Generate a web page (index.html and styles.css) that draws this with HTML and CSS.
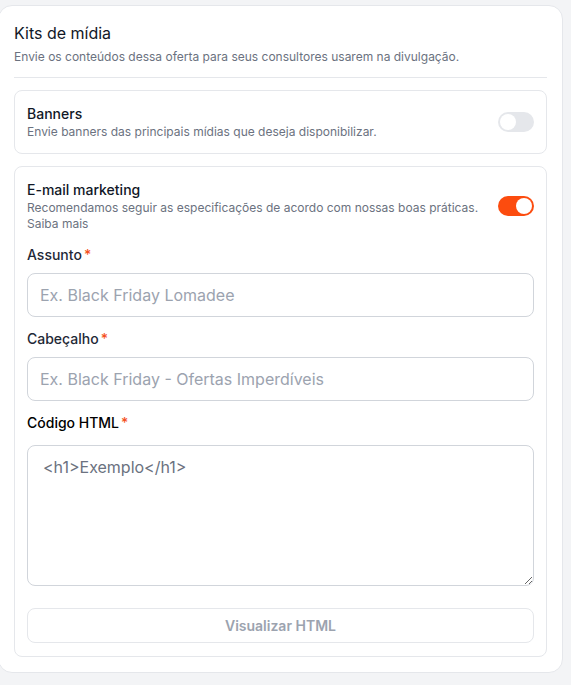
FILE: index.html
```html
<!DOCTYPE html>
<html lang="pt-BR">
<head>
  <meta charset="UTF-8">
  <meta name="viewport" content="width=device-width, initial-scale=1.0">
  <title>Kits de mídia</title>
  <link rel="stylesheet" href="styles.css">
</head>
<body>

  <div class="panel">
    <h1 class="panel-title">Kits de mídia</h1>
    <p class="panel-sub">Envie os conteúdos dessa oferta para seus consultores usarem na divulgação.</p>
    <hr class="divider">

    <!-- Banners -->
    <div class="kit">
      <div class="kit-head">
        <div class="kit-text">
          <h2 class="kit-title">Banners</h2>
          <p class="kit-desc">Envie banners das principais mídias que deseja disponibilizar.</p>
        </div>
        <span class="toggle"><span class="knob"></span></span>
      </div>
    </div>

    <!-- E-mail marketing -->
    <div class="kit">
      <div class="kit-head">
        <div class="kit-text">
          <h2 class="kit-title">E-mail marketing</h2>
          <p class="kit-desc">Recomendamos seguir as especificações de acordo com nossas boas práticas.
            <a class="kit-link" href="#">Saiba mais</a></p>
        </div>
        <span class="toggle on"><span class="knob"></span></span>
      </div>

      <div class="field first">
        <label class="field-label">Assunto<span class="req">*</span></label>
        <input class="field-input" type="text" placeholder="Ex. Black Friday Lomadee">
      </div>

      <div class="field">
        <label class="field-label">Cabeçalho<span class="req">*</span></label>
        <input class="field-input" type="text" placeholder="Ex. Black Friday - Ofertas Imperdíveis">
      </div>

      <div class="field">
        <label class="field-label active">Código HTML<span class="req">*</span></label>
        <textarea class="field-code">&lt;h1&gt;Exemplo&lt;/h1&gt;</textarea>
      </div>

      <button class="preview-btn" type="button">Visualizar HTML</button>
    </div>
  </div>

</body>
</html>
```

FILE: styles.css
```css
body {
  font-family: 'Inter', 'Liberation Sans', sans-serif;
  background-color: #f3f4f6;
  color: #111827;
  margin: 0;
  padding: 5px 0 0 0;
}

/* card principal */
.panel {
  width: 565px;
  margin-left: -2px;
  box-sizing: border-box;
  background: #fff;
  border: 1px solid #e5e7eb;
  border-radius: 14px;
  padding: 15px 15px 15px 15px;
}

.panel-title {
  font-size: 16px;
  font-weight: 400;
  line-height: 24px;
  margin: 0;
  color: #111827;
}

.panel-sub {
  font-size: 12px;
  line-height: 16px;
  color: #6b7280;
  margin: 4px 0 0 0;
}

.divider {
  border: none;
  border-top: 1px solid #e5e7eb;
  margin: 12px 0 12px 0;
}

/* cada kit */
.kit {
  border: 1px solid #e5e7eb;
  border-radius: 8px;
  padding: 13px 12px 13px 12px;
}

.kit + .kit {
  margin-top: 12px;
}

.kit-head {
  display: flex;
  align-items: center;
  gap: 16px;
}

.kit-text {
  flex: 1;
}

.kit-title {
  font-size: 14px;
  font-weight: 500;
  line-height: 20px;
  margin: 0;
  color: #111827;
}

.kit-desc {
  font-size: 12px;
  line-height: 16px;
  color: #6b7280;
  margin: 0;
}

.kit-link {
  display: block;
  color: #6b7280;
  text-decoration: none;
}

/* toggle */
.toggle {
  width: 36px;
  height: 20px;
  border-radius: 10px;
  background: #e5e7eb;
  display: flex;
  align-items: center;
  padding: 0 2px;
  box-sizing: border-box;
  flex-shrink: 0;
}

.toggle .knob {
  width: 16px;
  height: 16px;
  border-radius: 50%;
  background: #fff;
}

.toggle.on {
  background: #fc4c0f;
  justify-content: flex-end;
}

/* campos */
.field {
  margin-top: 12px;
}

.field.first {
  margin-top: 13px;
}

.field-label {
  display: block;
  font-size: 14px;
  font-weight: 500;
  line-height: 20px;
  color: #1f2937;
  margin-bottom: 8px;
}

.field-label.active {
  color: #000;
  margin-bottom: 12px;
}

.req {
  color: #f4511e;
  margin-left: 2px;
}

.field-input {
  display: block;
  width: 100%;
  box-sizing: border-box;
  height: 44px;
  border: 1px solid #d1d5db;
  border-radius: 8px;
  padding: 0 12px;
  font-family: inherit;
  font-size: 16px;
  color: #111827;
  background: #fff;
}

.field-input::placeholder {
  color: #9ca3af;
}

.field-code {
  display: block;
  width: 100%;
  box-sizing: border-box;
  height: 141px;
  border: 1px solid #d1d5db;
  border-radius: 8px;
  padding: 9px 15px;
  font-family: inherit;
  font-size: 16px;
  line-height: 24px;
  color: #6b7280;
  background: #fff;
}

.preview-btn {
  display: block;
  width: 100%;
  height: 35px;
  margin-top: 22px;
  background: #fff;
  border: 1px solid #e5e7eb;
  border-radius: 8px;
  font-family: inherit;
  font-size: 14px;
  font-weight: 600;
  color: #9ca3af;
  cursor: pointer;
}
```
